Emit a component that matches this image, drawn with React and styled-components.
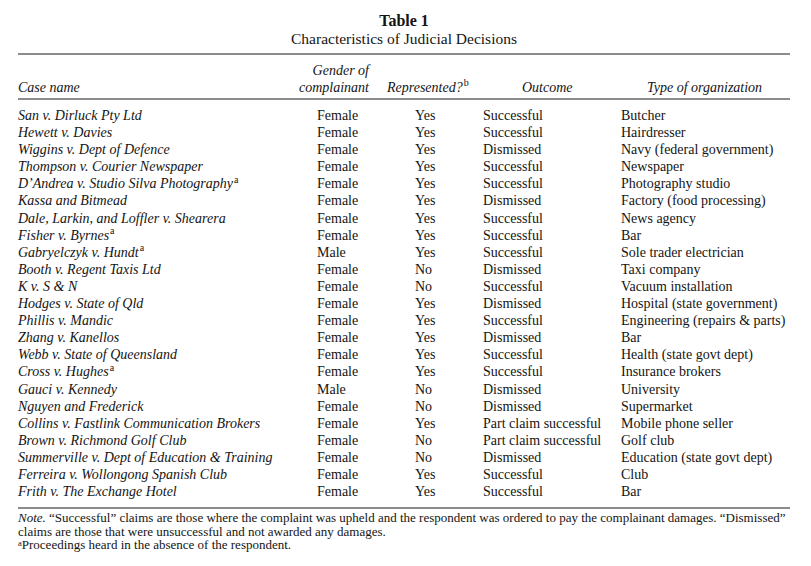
import styled, { createGlobalStyle } from 'styled-components';

const GlobalStyle = createGlobalStyle`
  html, body {
    margin: 0;
    padding: 0;
    background: #ffffff;
  }
  body {
    font-family: "Liberation Serif", "Times New Roman", serif;
    color: #141414;
  }
`;

const cases = [
  ['San v. Dirluck Pty Ltd', false, 'Female', 'Yes', 'Successful', 'Butcher'],
  ['Hewett v. Davies', false, 'Female', 'Yes', 'Successful', 'Hairdresser'],
  ['Wiggins v. Dept of Defence', false, 'Female', 'Yes', 'Dismissed', 'Navy (federal government)'],
  ['Thompson v. Courier Newspaper', false, 'Female', 'Yes', 'Successful', 'Newspaper'],
  ['D’Andrea v. Studio Silva Photography', true, 'Female', 'Yes', 'Successful', 'Photography studio'],
  ['Kassa and Bitmead', false, 'Female', 'Yes', 'Dismissed', 'Factory (food processing)'],
  ['Dale, Larkin, and Loffler v. Shearera', false, 'Female', 'Yes', 'Successful', 'News agency'],
  ['Fisher v. Byrnes', true, 'Female', 'Yes', 'Successful', 'Bar'],
  ['Gabryelczyk v. Hundt', true, 'Male', 'Yes', 'Successful', 'Sole trader electrician'],
  ['Booth v. Regent Taxis Ltd', false, 'Female', 'No', 'Dismissed', 'Taxi company'],
  ['K v. S & N', false, 'Female', 'No', 'Successful', 'Vacuum installation'],
  ['Hodges v. State of Qld', false, 'Female', 'Yes', 'Dismissed', 'Hospital (state government)'],
  ['Phillis v. Mandic', false, 'Female', 'Yes', 'Successful', 'Engineering (repairs & parts)'],
  ['Zhang v. Kanellos', false, 'Female', 'Yes', 'Dismissed', 'Bar'],
  ['Webb v. State of Queensland', false, 'Female', 'Yes', 'Successful', 'Health (state govt dept)'],
  ['Cross v. Hughes', true, 'Female', 'Yes', 'Successful', 'Insurance brokers'],
  ['Gauci v. Kennedy', false, 'Male', 'No', 'Dismissed', 'University'],
  ['Nguyen and Frederick', false, 'Female', 'No', 'Dismissed', 'Supermarket'],
  ['Collins v. Fastlink Communication Brokers', false, 'Female', 'Yes', 'Part claim successful', 'Mobile phone seller'],
  ['Brown v. Richmond Golf Club', false, 'Female', 'No', 'Part claim successful', 'Golf club'],
  ['Summerville v. Dept of Education & Training', false, 'Female', 'No', 'Dismissed', 'Education (state govt dept)'],
  ['Ferreira v. Wollongong Spanish Club', false, 'Female', 'Yes', 'Successful', 'Club'],
  ['Frith v. The Exchange Hotel', false, 'Female', 'Yes', 'Successful', 'Bar'],
];

const App = () => {
  return (
    <>
      <GlobalStyle />
      <Page>
        <Caption>
          <TableNumber>Table 1</TableNumber>
          <TableTitle>Characteristics of Judicial Decisions</TableTitle>
        </Caption>

        <HeadRow>
          <HeadCell>Case name</HeadCell>
          <HeadCell align="right">
            Gender of
            <br />
            complainant
          </HeadCell>
          <HeadCell>
            Represented?<Sup>b</Sup>
          </HeadCell>
          <HeadCell>Outcome</HeadCell>
          <HeadCell>Type of organization</HeadCell>
        </HeadRow>

        <Body>
          {cases.map(([name, absent, gender, rep, outcome, org]) => (
            <Row key={name}>
              <CaseCell>
                {name}
                {absent && <Sup>a</Sup>}
              </CaseCell>
              <Cell>{gender}</Cell>
              <Cell>{rep}</Cell>
              <Cell>{outcome}</Cell>
              <Cell>{org}</Cell>
            </Row>
          ))}
        </Body>

        <Notes>
          <NoteLine>
            <em>Note.</em> “Successful” claims are those where the complaint was upheld and the respondent was
            ordered to pay the complainant damages. “Dismissed”
          </NoteLine>
          <NoteLine>claims are those that were unsuccessful and not awarded any damages.</NoteLine>
          <NoteLine>
            <NoteSup>a</NoteSup>Proceedings heard in the absence of the respondent.
          </NoteLine>
        </Notes>
      </Page>
    </>
  );
};

const Page = styled.div`
  width: 772px;
  margin-left: 18px;
  padding-top: 11px;
`;

const Caption = styled.div`
  display: flex;
  flex-direction: column;
  align-items: center;
  padding-bottom: 5px;
  border-bottom: 2px solid #8c8c8c;
`;

const TableNumber = styled.div`
  font-size: 16px;
  font-weight: 700;
  line-height: 19px;
`;

const TableTitle = styled.div`
  font-size: 15.5px;
  line-height: 18px;
`;

const HeadRow = styled.div`
  display: grid;
  grid-template-columns: 280px 89px 135px 125px 1fr;
  align-items: end;
  padding: 7px 0 2px;
  border-bottom: 2px solid #8c8c8c;
`;

const HeadCell = styled.div`
  font-style: italic;
  font-size: 14px;
  line-height: 17px;
  white-space: nowrap;
  text-align: ${(p) => p.align || 'left'};
  padding-right: ${(p) => (p.align === 'right' ? '18px' : '0')};
`;

const Body = styled.div`
  padding: 7px 0 7px;
  border-bottom: 2px solid #8c8c8c;
`;

const Row = styled.div`
  display: grid;
  grid-template-columns: 299px 98px 68px 138px 1fr;
  font-size: 14px;
  line-height: 17.1px;
  white-space: nowrap;
`;

const Cell = styled.div``;

const CaseCell = styled.div`
  font-style: italic;
`;

const Sup = styled.sup`
  font-style: normal;
  font-size: 10px;
  line-height: 0;
  margin-left: 1px;
`;

const Notes = styled.div`
  padding-top: 2px;
  font-size: 13px;
  line-height: 13.5px;
`;

const NoteLine = styled.div`
  white-space: nowrap;
`;

const NoteSup = styled.sup`
  font-size: 8.5px;
  line-height: 0;
  vertical-align: 3px;
`;

export default App;
